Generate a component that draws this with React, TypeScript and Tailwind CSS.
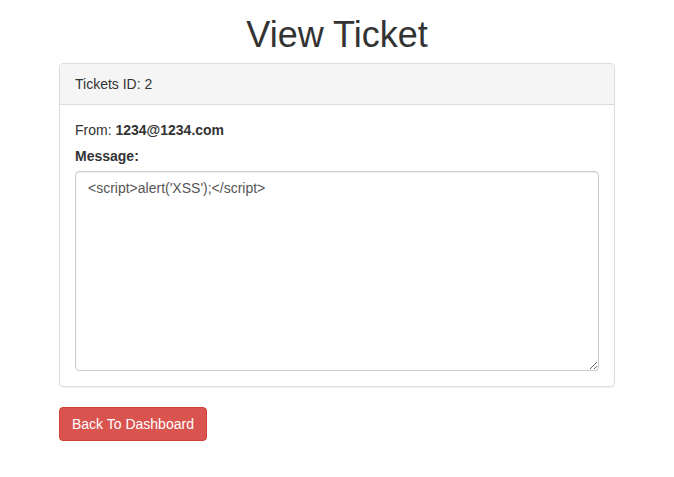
export default function App() {
  return (
    <div className="min-h-screen bg-white text-[14px] leading-[20px] text-[#333] font-['Liberation_Sans',Arial,sans-serif]">
      <div className="w-[556px] mx-auto pt-[15px]">
        <h1 className="text-center text-[36px] leading-[40px] font-normal mb-[8px]">View Ticket</h1>

        <div className="border border-[#ddd] rounded-[4px] shadow-[0_1px_1px_rgba(0,0,0,0.05)] mb-[20px]">
          <div className="bg-[#f5f5f5] border-b border-[#ddd] rounded-t-[3px] px-[15px] py-[10px]">
            Tickets ID: 2
          </div>
          <div className="p-[15px]">
            <div className="mb-[6px]">
              From: <b className="font-bold">1234@1234.com</b>
            </div>
            <label className="block font-bold mb-[5px]">Message:</label>
            <textarea
              readOnly
              defaultValue="<script>alert('XSS');</script>"
              className="block w-full h-[200px] px-[12px] py-[6px] text-[14px] leading-[20px] text-[#555] border border-[#ccc] rounded-[4px] shadow-[inset_0_1px_1px_rgba(0,0,0,0.075)] outline-none font-['Liberation_Sans',Arial,sans-serif]"
            />
          </div>
        </div>

        <button className="h-[34px] px-[12px] text-[14px] leading-[20px] text-white bg-[#d9534f] border border-[#d43f3a] rounded-[4px]">
          Back To Dashboard
        </button>
      </div>
    </div>
  );
}
